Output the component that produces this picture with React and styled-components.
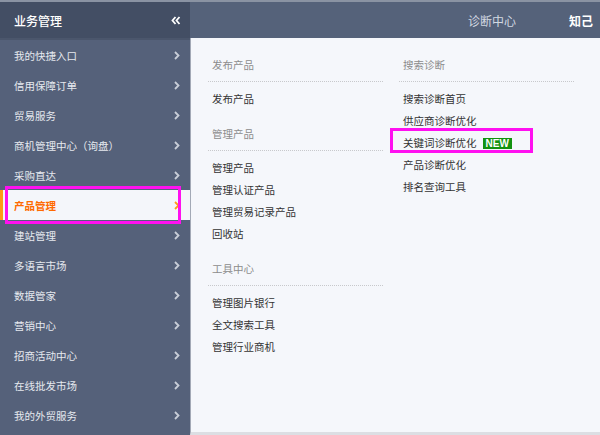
import React from "react";
import styled, { createGlobalStyle } from "styled-components";

const GlobalStyle = createGlobalStyle`
  html, body {
    margin: 0;
    padding: 0;
    background: #f5f7fb;
  }
  body {
    font-family: "Noto Sans CJK SC", "Liberation Sans", sans-serif;
  }
`;

const Page = styled.div`
  display: flex;
  width: 600px;
  height: 435px;
  border-top: 2px solid #8a93a3;
  box-sizing: border-box;
  overflow: hidden;
`;

const Sidebar = styled.div`
  width: 190px;
  flex-shrink: 0;
  background: #55617a;
  display: flex;
  flex-direction: column;
`;

const SideHeader = styled.div`
  height: 36px;
  border-bottom: 2px solid #4b566c;
  background: #434e64;
  display: flex;
  align-items: center;
  justify-content: space-between;
  padding: 0 9px 0 14px;
  color: #ffffff;
  font-size: 12px;
  font-weight: 500;
`;

const SideItem = styled.div`
  position: relative;
  height: 30px;
  flex-shrink: 0;
  display: flex;
  align-items: center;
  justify-content: space-between;
  padding: 0 10px 0 ${(p) => (p.$active ? "11px" : "14px")};
  font-size: 10.5px;
  color: ${(p) => (p.$active ? "#ff6a00" : "#e6e9ef")};
  font-weight: ${(p) => (p.$active ? 700 : 400)};
  background: ${(p) => (p.$active ? "#f4f6fa" : "transparent")};
  border-left: ${(p) => (p.$active ? "3px solid #ff9a1a" : "none")};
`;

const Highlight = styled.div`
  position: absolute;
  border: 3px solid #ff10f0;
  box-sizing: border-box;
  pointer-events: none;
`;

const Main = styled.div`
  flex: 1;
  display: flex;
  flex-direction: column;
  min-width: 0;
`;

const TopBar = styled.div`
  height: 36px;
  background: #55627a;
  display: flex;
  align-items: center;
  justify-content: flex-end;
  padding-right: 7px;
  gap: 53px;
  font-size: 12px;
`;

const TopLink = styled.span`
  color: ${(p) => (p.$strong ? "#ffffff" : "#d3d9e2")};
  font-weight: ${(p) => (p.$strong ? 700 : 400)};
`;

const Panel = styled.div`
  flex: 1;
  background: #f5f7fb;
  border-left: 1px solid #a3a9b6;
  border-bottom: 3px solid #dcdee3;
  display: flex;
  gap: 16px;
  padding: 17px 0 0 17px;
`;

const Column = styled.div`
  width: 175px;
  display: flex;
  flex-direction: column;
`;

const Section = styled.div`
  display: flex;
  flex-direction: column;
  & + & {
    margin-top: 14px;
  }
`;

const SectionTitle = styled.div`
  line-height: 20px;
  font-size: 10.5px;
  color: #8c8c8c;
  padding-left: 4px;
  padding-bottom: 6px;
  border-bottom: 1px dotted #c8c9cc;
  margin-bottom: 6px;
`;

const Link = styled.div`
  position: relative;
  line-height: 22px;
  font-size: 10.5px;
  color: #333333;
  padding-left: 4px;
  display: flex;
  align-items: center;
`;

const NewBadge = styled.span`
  margin-left: 6px;
  background: #12920f;
  color: #ffffff;
  font-family: "Liberation Sans", Arial, sans-serif;
  font-weight: 700;
  font-size: 10px;
  line-height: 11px;
  padding: 0 3px;
`;

const Chevron = ({ color }) => (
  <svg width="6" height="9" viewBox="0 0 6 9">
    <path d="M1 1 L4.5 4.5 L1 8" fill="none" stroke={color} strokeWidth="1.8" />
  </svg>
);

const DoubleChevron = () => (
  <svg width="10" height="9" viewBox="0 0 10 9">
    <path
      d="M4.5 1 L1.5 4.5 L4.5 8 M8.5 1 L5.5 4.5 L8.5 8"
      fill="none"
      stroke="#ffffff"
      strokeWidth="1.8"
    />
  </svg>
);

const menu = [
  "我的快捷入口",
  "信用保障订单",
  "贸易服务",
  "商机管理中心（询盘）",
  "采购直达",
  "产品管理",
  "建站管理",
  "多语言市场",
  "数据管家",
  "营销中心",
  "招商活动中心",
  "在线批发市场",
  "我的外贸服务",
];

const leftSections = [
  { title: "发布产品", links: ["发布产品"] },
  {
    title: "管理产品",
    links: ["管理产品", "管理认证产品", "管理贸易记录产品", "回收站"],
  },
  {
    title: "工具中心",
    links: ["管理图片银行", "全文搜索工具", "管理行业商机"],
  },
];

const rightLinks = [
  "搜索诊断首页",
  "供应商诊断优化",
  "关键词诊断优化",
  "产品诊断优化",
  "排名查询工具",
];

export default function App() {
  return (
    <>
      <GlobalStyle />
      <Page>
        <Sidebar>
          <SideHeader>
            <span>业务管理</span>
            <DoubleChevron />
          </SideHeader>
          {menu.map((name) => {
            const active = name === "产品管理";
            return (
              <SideItem key={name} $active={active}>
                <span>{name}</span>
                <Chevron color={active ? "#ff9a1a" : "#c9ced8"} />
                {active && (
                  <Highlight
                    style={{ top: -4, left: 2, width: 176, height: 38 }}
                  />
                )}
              </SideItem>
            );
          })}
        </Sidebar>
        <Main>
          <TopBar>
            <TopLink>诊断中心</TopLink>
            <TopLink $strong>知己</TopLink>
          </TopBar>
          <Panel>
            <Column>
              {leftSections.map((s) => (
                <Section key={s.title}>
                  <SectionTitle>{s.title}</SectionTitle>
                  {s.links.map((l) => (
                    <Link key={l}>{l}</Link>
                  ))}
                </Section>
              ))}
            </Column>
            <Column>
              <Section>
                <SectionTitle>搜索诊断</SectionTitle>
                {rightLinks.map((l) => (
                  <Link key={l}>
                    {l}
                    {l === "关键词诊断优化" && (
                      <>
                        <NewBadge>NEW</NewBadge>
                        <Highlight
                          style={{ top: -4, left: -9, width: 143, height: 25 }}
                        />
                      </>
                    )}
                  </Link>
                ))}
              </Section>
            </Column>
          </Panel>
        </Main>
      </Page>
    </>
  );
}
